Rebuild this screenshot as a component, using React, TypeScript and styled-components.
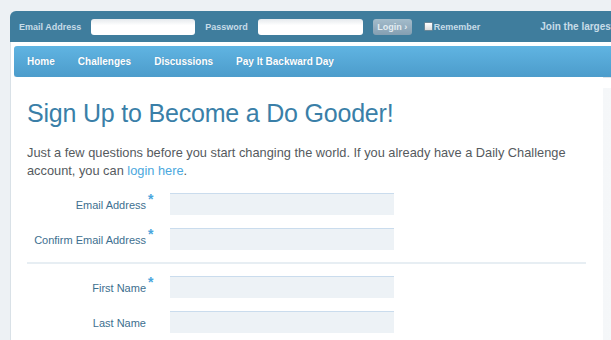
import styled, {createGlobalStyle} from "styled-components";

const GlobalStyle = createGlobalStyle`
  html, body {
    margin: 0;
    padding: 0;
    background: #edf1f4;
    overflow: hidden;
    font-family: 'Liberation Sans', Arial, sans-serif;
  }
`

const loginFields = [
    {label: 'Email Address', width: 104},
    {label: 'Password', width: 105},
]

const navItems = ['Home', 'Challenges', 'Discussions', 'Pay It Backward Day']

const App = () => {
    return <SPage>
        <GlobalStyle/>
        <SFrame>
            <STopBar>
                {loginFields.map(field => <SLoginGroup key={field.label}>
                    <STopLabel>{field.label}</STopLabel>
                    <STopInput $width={field.width}/>
                </SLoginGroup>)}
                <SLoginButton>Login ›</SLoginButton>
                <SRemember>
                    <SCheck/>
                    <span>Remember</span>
                </SRemember>
                <SJoin>Join the largest community of do gooders</SJoin>
            </STopBar>
            <SBody>
                <SNav>
                    {navItems.map(item => <SNavItem key={item}>{item}</SNavItem>)}
                </SNav>
                <SColumns>
                    <SContent>
                        <STitle>Sign Up to Become a Do Gooder!</STitle>
                        <SIntro>
                            Just a few questions before you start changing the world. If you already have a Daily Challenge<br/>
                            account, you can <SLink href="#">login here</SLink>.
                        </SIntro>
                        <SForm>
                            <SRow>
                                <SLabel>Email Address</SLabel>
                                <SStar>*</SStar>
                                <SField/>
                            </SRow>
                            <SRow>
                                <SLabel>Confirm Email Address</SLabel>
                                <SStar>*</SStar>
                                <SField/>
                            </SRow>
                            <SDivider/>
                            <SRow>
                                <SLabel>First Name</SLabel>
                                <SStar>*</SStar>
                                <SField/>
                            </SRow>
                            <SRow>
                                <SLabel>Last Name</SLabel>
                                <SStar $hidden>*</SStar>
                                <SField/>
                            </SRow>
                        </SForm>
                    </SContent>
                    <SSide/>
                </SColumns>
            </SBody>
        </SFrame>
    </SPage>
}

const SPage = styled.div`
  width: 611px;
  height: 340px;
  padding: 11px 0 0 10px;
  box-sizing: border-box;
  overflow: hidden;
`

const SFrame = styled.div`
  width: 680px;
`

const STopBar = styled.div`
  height: 31px;
  display: flex;
  align-items: center;
  padding-left: 9px;
  white-space: nowrap;
  font-size: 9px;
  font-weight: bold;
  color: #c7dce8;
  background: #3f7d9d;
  border-radius: 6px 0 0 0;
`

const SLoginGroup = styled.div`
  display: flex;
  align-items: center;
  margin-right: 10px;
`

const STopLabel = styled.span`
  margin-right: 10px;
`

const STopInput = styled.div<{ $width: number }>`
  width: ${({$width}) => $width}px;
  height: 16px;
  background: linear-gradient(#e6eaed, #ffffff 40%);
  border-radius: 3px;
`

const SLoginButton = styled.div`
  flex-shrink: 0;
  width: 39px;
  height: 16px;
  line-height: 16px;
  text-align: center;
  border-radius: 3px;
  background: linear-gradient(#a4bccb, #849fb2);
  color: #e3ecf1;
  font-size: 9px;
`

const SRemember = styled.div`
  display: flex;
  align-items: center;
  margin-left: 12px;
`

const SCheck = styled.div`
  width: 7px;
  height: 7px;
  background: linear-gradient(#ffffff, #dcdcdc);
  border: 1px solid #6a8797;
  border-radius: 1px;
  margin-right: 1px;
`

const SJoin = styled.span`
  margin-left: 60px;
  font-size: 10px;
`

const SBody = styled.div`
  background: #ffffff;
  border-left: 1px solid #d9e1e7;
  padding: 4px 0 0 3px;
`

const SNav = styled.nav`
  height: 31px;
  display: flex;
  align-items: center;
  padding-left: 13px;
  border-radius: 3px 0 0 3px;
  background: linear-gradient(#60b4e2, #4c9ccb);
  box-shadow: 0 1px 0 #dfe4e8;
`

const SNavItem = styled.a`
  color: #ffffff;
  font-size: 10px;
  font-weight: bold;
  margin-right: 23px;
  text-shadow: 0 0 1px rgba(40, 100, 140, 0.4);
`

const SColumns = styled.div`
  display: flex;
  margin-left: -3px;
`

const SContent = styled.div`
  width: 576px;
  padding: 21px 0 0 16px;
  background: #ffffff;
`

const SSide = styled.div`
  flex: 1;
  margin-top: 11px;
  height: 260px;
  background: linear-gradient(90deg, #f5f7f9, #f8fafb);
`

const STitle = styled.h1`
  margin: 0;
  font-size: 25px;
  font-weight: normal;
  color: #3a7fa8;
  line-height: 30px;
  letter-spacing: -0.2px;
`

const SIntro = styled.p`
  margin: 16px 0 0;
  font-size: 12.8px;
  line-height: 18px;
  color: #555a5e;
  white-space: nowrap;
`

const SLink = styled.a`
  color: #4ba8de;
  text-decoration: none;
`

const SForm = styled.div`
  margin-top: 13px;
  width: 559px;
`

const SRow = styled.div`
  display: flex;
  align-items: center;
  height: 22px;
  margin-bottom: 13px;
`

const SLabel = styled.label`
  width: 119px;
  flex-shrink: 0;
  text-align: right;
  font-size: 11px;
  color: #3d6f8f;
  padding-top: 1px;
`

const SStar = styled.span<{ $hidden?: boolean }>`
  visibility: ${({$hidden}) => $hidden ? 'hidden' : 'visible'};
  width: 22px;
  padding-left: 2px;
  align-self: flex-start;
  margin-top: 1px;
  color: #4aa6dd;
  font-size: 14px;
  font-weight: bold;
  line-height: 10px;
`

const SField = styled.div`
  width: 224px;
  height: 21px;
  background: #edf2f6;
  border-top: 1px solid #cadced;
`

const SDivider = styled.hr`
  border: none;
  height: 2px;
  background: #e7eef3;
  margin: -1px 0 12px;
`

export default App
